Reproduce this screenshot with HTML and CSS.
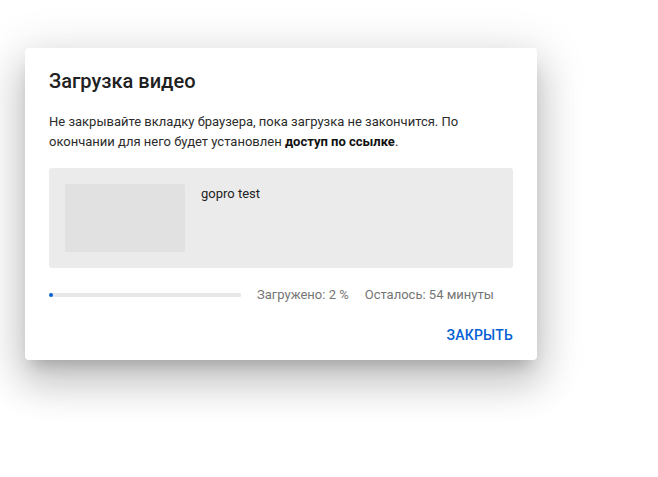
FILE: index.html
```html
<!DOCTYPE html>
<html lang="ru">
<head>
<meta charset="utf-8">
<title>Загрузка видео</title>
<link rel="stylesheet" href="styles.css">
</head>
<body>
<div class="dialog">
  <h2 class="title">Загрузка видео</h2>
  <p class="desc">Не закрывайте вкладку браузера, пока загрузка не закончится. По окончании для него будет установлен <b>доступ по ссылке</b>.</p>
  <div class="item">
    <div class="thumb"></div>
    <div class="name">gopro test</div>
  </div>
  <div class="progress-row">
    <div class="bar"><div class="fill" style="width:2%"></div></div>
    <span class="stat">Загружено: 2 %</span>
    <span class="stat">Осталось: 54 минуты</span>
  </div>
  <div class="actions">
    <button class="btn">Закрыть</button>
  </div>
</div>
</body>
</html>
```
FILE: styles.css
```css
html, body {
  margin: 0;
  padding: 0;
  background: #fff;
}
html {
  height: 100%;
}
body {
  font-family: Roboto, "Noto Sans", Arial, sans-serif;
  padding: 48px 0 0 25px;
  min-height: 100%;
  box-sizing: border-box;
}
.dialog {
  width: 512px;
  box-sizing: border-box;
  padding: 19px 24px 7px 24px;
  background: #fff;
  border-radius: 4px;
  box-shadow: 0 11px 15px -7px rgba(0,0,0,.2), 0 24px 38px 3px rgba(0,0,0,.14), 0 9px 46px 8px rgba(0,0,0,.12);
}
.title {
  margin: 0 0 17px 0;
  font-size: 20px;
  line-height: 28px;
  font-weight: 500;
  color: #212121;
}
.desc {
  margin: 0 0 16px 0;
  font-size: 13px;
  line-height: 20px;
  color: #2b2b2b;
}
.desc b {
  font-weight: 700;
  color: #111;
}
.item {
  display: flex;
  gap: 16px;
  height: 100px;
  box-sizing: border-box;
  padding: 16px;
  background: #ebebeb;
  border-radius: 3px;
}
.thumb {
  width: 120px;
  height: 68px;
  background: #e1e1e1;
  border-radius: 2px;
  flex: none;
}
.name {
  font-size: 13px;
  line-height: 20px;
  color: #222;
}
.progress-row {
  display: flex;
  align-items: center;
  gap: 16px;
  margin-top: 17px;
  height: 20px;
  font-size: 13px;
  line-height: 20px;
}
.bar {
  width: 192px;
  height: 4px;
  background: #e8e8e8;
  flex: none;
  overflow: hidden;
  border-radius: 1px;
}
.fill {
  height: 100%;
  background: #065fd4;
  border-radius: 2px;
}
.stat {
  color: #757575;
}
.actions {
  display: flex;
  justify-content: flex-end;
  margin-top: 12px;
}
.btn {
  height: 36px;
  padding: 0;
  border: 0;
  background: transparent;
  font-family: Roboto, "Noto Sans", Arial, sans-serif;
  font-size: 14px;
  font-weight: 500;
  letter-spacing: 0.2px;
  text-transform: uppercase;
  color: #065fd4;
  cursor: pointer;
}
```
